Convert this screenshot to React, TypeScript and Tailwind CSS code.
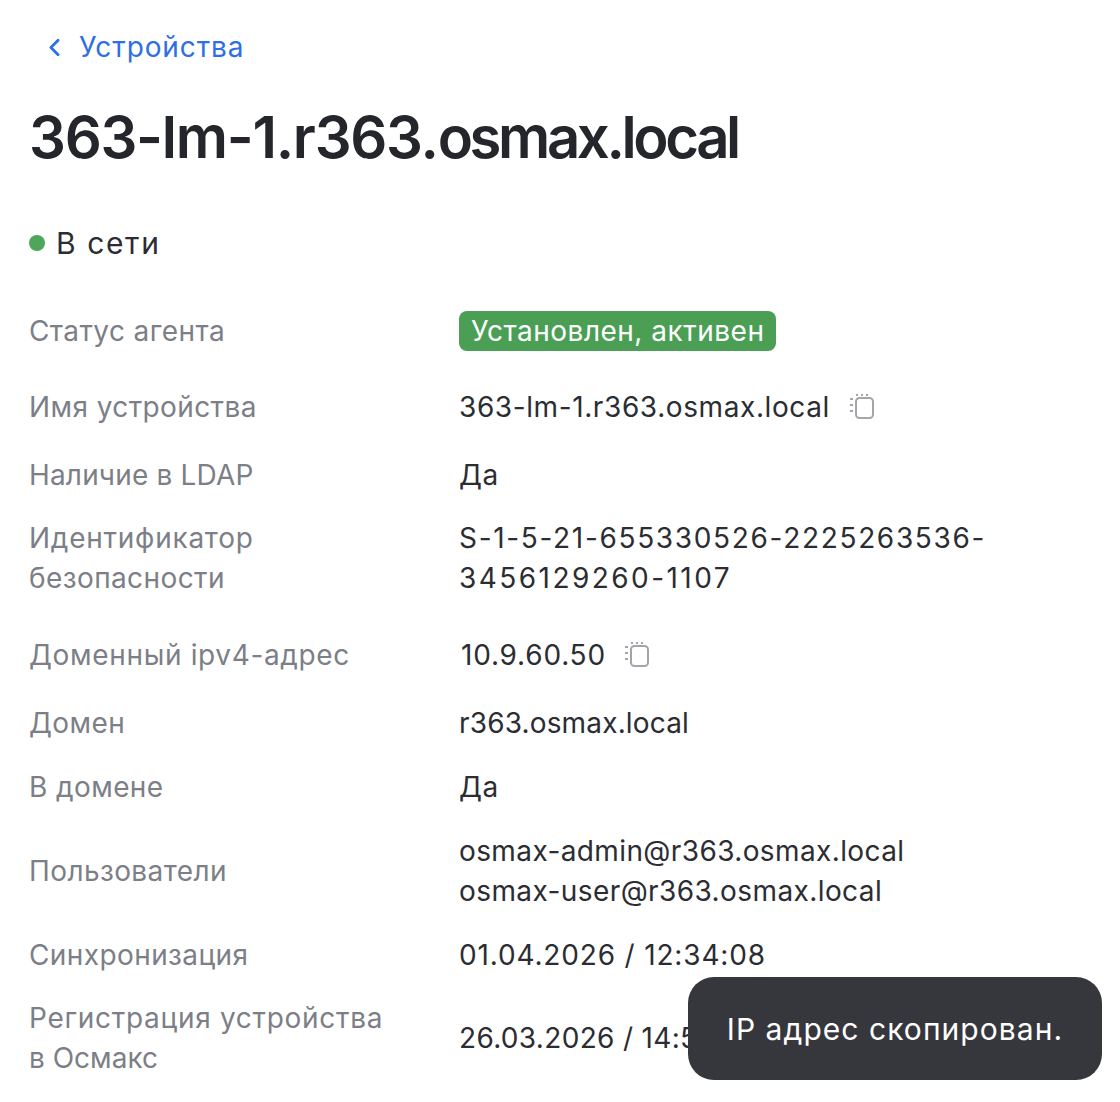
import { ChevronLeft } from "lucide-react";

function CopyIcon() {
  return (
    <svg width="26" height="28" viewBox="0 0 26 28" fill="none" className="text-[#a3a5aa]" stroke="currentColor">
      <rect x="7" y="5" width="17" height="20" rx="3.5" strokeWidth="2" />
      <path d="M1 6h3M1 12h3M1 18h3M8 1v2M13 1v2M18 1v2" strokeWidth="2" />
    </svg>
  );
}

function Row({ label, mt, children }: { label: React.ReactNode; mt: string; children: React.ReactNode }) {
  return (
    <div className={`flex items-center ${mt}`}>
      <div className="w-[430px] shrink-0 tracking-[0.4px] text-[#7c7f87]">{label}</div>
      <div className="text-[#2b2d33]">{children}</div>
    </div>
  );
}

export default function App() {
  return (
    <div
      className="relative h-[1102px] w-[1120px] overflow-hidden bg-white pl-[29px] text-[28px] leading-[40px] tracking-[0.6px]"
      style={{ fontFamily: "Inter, 'Noto Sans', sans-serif" }}
    >
      <a className="flex items-center pt-[27px] pl-[11px] tracking-[0.9px] text-[#2f6fe4]">
        <ChevronLeft size={29} strokeWidth={2.3} />
        <span className="ml-[10px]">Устройства</span>
      </a>

      <h1 className="mt-[30px] text-[58px] leading-[80px] font-semibold text-[#24262b]">
        <span className="tracking-[-1.27px]">363-lm-1.r363.</span>
        <span className="tracking-[-3.4px]">osmax.local</span>
      </h1>

      <div className="mt-[46px] flex items-center text-[#2b2d33]">
        <span className="h-4 w-4 rounded-full bg-[#4ea65a]" />
        <span className="ml-[11px] text-[30px] tracking-[1.6px]">В сети</span>
      </div>

      <div className="mt-[48px]">
        <Row label="Статус агента" mt="">
          <span className="block rounded-lg bg-[#4a9f55] px-3 tracking-[0.5px] text-white">Установлен, активен</span>
        </Row>
        <Row label="Имя устройства" mt="mt-[36px]">
          <span className="flex items-center">
            363-lm-1.r363.osmax.local
            <span className="ml-[19px]"><CopyIcon /></span>
          </span>
        </Row>
        <Row label={<span className="tracking-[0.17px]">Наличие в LDAP</span>} mt="mt-[28px]">Да</Row>
        <Row
          label={<><span className="tracking-[0.75px]">Идентификатор</span><br />безопасности</>}
          mt="mt-[23px]"
        >
          <span className="tracking-[1.67px]">S-1-5-21-655330526-2225263536-</span>
          <br />
          <span className="tracking-[2.45px]">3456129260-1107</span>
        </Row>
        <Row label={<span className="tracking-[0.65px]">Доменный ipv4-адрес</span>} mt="mt-[37px]">
          <span className="flex items-center pl-[2px] tracking-[0.8px]">
            10.9.60.50
            <span className="ml-[18px]"><CopyIcon /></span>
          </span>
        </Row>
        <Row label="Домен" mt="mt-[28px]"><span className="tracking-[0.16px]">r363.osmax.local</span></Row>
        <Row label="В домене" mt="mt-[24px]">Да</Row>
        <Row label="Пользователи" mt="mt-[24px]">
          <span className="tracking-[0.39px]">osmax-admin@r363.osmax.local</span>
          <br />
          <span className="tracking-[0.41px]">osmax-user@r363.osmax.local</span>
        </Row>
        <Row label="Синхронизация" mt="mt-[24px]"><span className="tracking-[0.84px]">01.04.2026 / 12:34:08</span></Row>
        <Row
          label={<><span className="tracking-[0.7px]">Регистрация устройства</span><br /><span className="tracking-[0px]">в Осмакс</span></>}
          mt="mt-[23px]"
        >
          <span className="tracking-[0.33px]">26.03.2026 / 14:56:12</span>
        </Row>
      </div>

      <div className="absolute top-[977px] left-[688px] flex h-[103px] w-[414px] items-center justify-center rounded-[26px] bg-[#36373c] text-[30px] tracking-[1.05px] text-white">
        IP адрес скопирован.
      </div>
    </div>
  );
}
